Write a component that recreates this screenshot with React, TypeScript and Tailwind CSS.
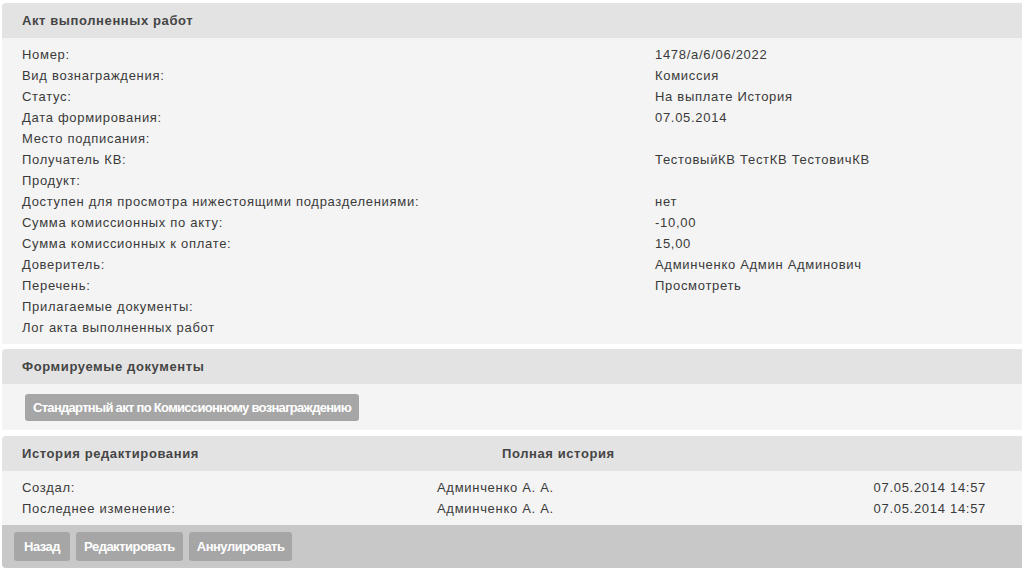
import React from "react";

const rows: [string, string][] = [
  ["Номер:", "1478/а/6/06/2022"],
  ["Вид вознаграждения:", "Комиссия"],
  ["Статус:", "На выплате История"],
  ["Дата формирования:", "07.05.2014"],
  ["Место подписания:", ""],
  ["Получатель КВ:", "ТестовыйКВ ТестКВ ТестовичКВ"],
  ["Продукт:", ""],
  ["Доступен для просмотра нижестоящими подразделениями:", "нет"],
  ["Сумма комиссионных по акту:", "-10,00"],
  ["Сумма комиссионных к оплате:", "15,00"],
  ["Доверитель:", "Админченко Админ Админович"],
  ["Перечень:", "Просмотреть"],
  ["Прилагаемые документы:", ""],
  ["Лог акта выполненных работ", ""],
];

const btnFont = { fontFamily: '"Liberation Sans Narrow", "Arial Narrow", "Liberation Sans", Arial, sans-serif' };

export default function App() {
  return (
    <div
      className="w-[1022px] h-[571px] bg-white pl-[2px] pt-[3px] text-[13px] text-[#3a3a3a] tracking-[0.7px]"
      style={{ fontFamily: '"Liberation Sans", Arial, sans-serif' }}
    >
      {/* Panel 1 */}
      <div className="rounded-tl-[4px] overflow-hidden">
        <div className="h-[35px] bg-[#e3e3e3] flex items-center px-[20px] font-bold text-[#454545] tracking-[0.6px]">
          Акт выполненных работ
        </div>
        <div className="bg-[#f4f4f4] pt-[6px] pb-[6px] px-[20px]">
          {rows.map(([l, v], i) => (
            <div key={i} className="h-[21px] flex items-center">
              <div className="w-[633px]">{l}</div>
              <div>{v}</div>
            </div>
          ))}
        </div>
      </div>

      {/* Panel 2 */}
      <div className="mt-[5px] rounded-tl-[4px] overflow-hidden">
        <div className="h-[35px] bg-[#e3e3e3] flex items-center px-[20px] font-bold text-[#454545] tracking-[0.6px]">
          Формируемые документы
        </div>
        <div className="bg-[#f4f4f4] h-[46px] pl-[23px] pt-[10px]">
          <button
            className="h-[27px] px-[8px] rounded-[3px] bg-[#a6a6a6] text-white font-bold text-[13px] tracking-[-0.7px]"
            style={btnFont}
          >
            Стандартный акт по Комиссионному вознаграждению
          </button>
        </div>
      </div>

      {/* Panel 3 */}
      <div className="mt-[6px] rounded-tl-[4px] rounded-bl-[4px] overflow-hidden">
        <div className="h-[35px] bg-[#e3e3e3] flex items-center px-[20px] font-bold text-[#454545] tracking-[0.6px]">
          <div className="w-[480px]">История редактирования</div>
          <div>Полная история</div>
        </div>
        <div className="bg-[#f4f4f4] pt-[6px] pb-[6px] px-[20px]">
          {[
            ["Создал:", "Админченко А. А.", "07.05.2014 14:57"],
            ["Последнее изменение:", "Админченко А. А.", "07.05.2014 14:57"],
          ].map(([a, b, c], i) => (
            <div key={i} className="h-[21px] flex items-center">
              <div className="w-[415px]">{a}</div>
              <div className="flex-1">{b}</div>
              <div className="pr-[16px]">{c}</div>
            </div>
          ))}
        </div>
        <div className="bg-[#c8c8c8] h-[43px] flex items-center gap-[6px] pl-[12px]">
          <button
            className="h-[29px] px-[10px] rounded-[3px] bg-[#a6a6a6] text-white font-bold text-[13px] tracking-[-0.5px]"
            style={btnFont}
          >
            Назад
          </button>
          <button
            className="h-[29px] px-[8px] rounded-[3px] bg-[#a6a6a6] text-white font-bold text-[13px] tracking-[-0.5px]"
            style={btnFont}
          >
            Редактировать
          </button>
          <button
            className="h-[29px] px-[8px] rounded-[3px] bg-[#a6a6a6] text-white font-bold text-[13px] tracking-[-0.5px]"
            style={btnFont}
          >
            Аннулировать
          </button>
        </div>
      </div>
    </div>
  );
}
